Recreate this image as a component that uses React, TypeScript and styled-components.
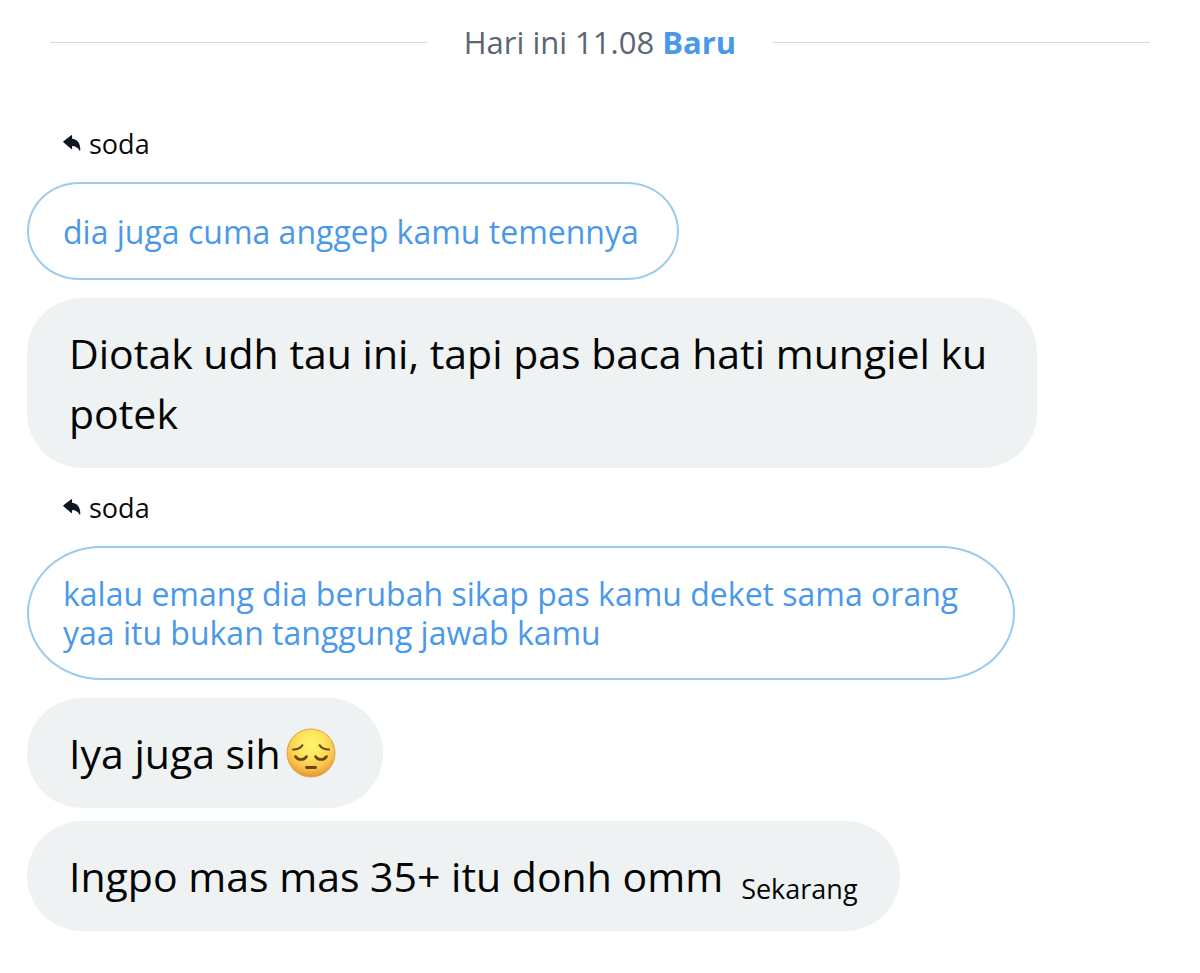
import React from "react";
import styled, { createGlobalStyle } from "styled-components";

const GlobalStyle = createGlobalStyle`
  *, *::before, *::after { box-sizing: border-box; }
  body {
    margin: 0;
    background: #ffffff;
    color: #0a0a0c;
    font-family: "Open Sans", "Noto Sans", sans-serif;
  }
`;

const Conversation = styled.main`
  display: flex;
  flex-direction: column;
  padding: 16px 27px 42px;
`;

const DateDivider = styled.div`
  display: flex;
  align-items: center;
  gap: 37px;
  margin: 0 23px 56px;
  color: #5b6573;
  font-size: 31px;
  line-height: 52px;

  &::before,
  &::after {
    content: "";
    flex: 1;
    height: 1px;
    background: #d3dae1;
  }
`;

const NewMark = styled.strong`
  color: #4a99e9;
  font-weight: 700;
`;

const Thread = styled.section`
  display: flex;
  flex-direction: column;
  align-items: flex-start;
  margin-bottom: 20px;

  &:last-child {
    margin-bottom: 0;
  }
`;

const ReplyTo = styled.p`
  display: flex;
  align-items: center;
  gap: 8px;
  margin: 0 36px 18px;
  font-size: 27px;
  line-height: 40px;
`;

const Quote = styled.blockquote<{ $tall?: boolean }>`
  display: flex;
  align-items: center;
  max-width: 988px;
  min-height: 98px;
  margin: 0 0 18px;
  padding: 26px 38px 26px 34px;
  border: 2px solid #9ccbee;
  border-radius: ${(p) => (p.$tall ? "74px / 67px" : "52px / 49px")};
  color: #4a99e9;
  font-size: 32px;
  line-height: 39px;
`;

const Bubbles = styled.div`
  display: flex;
  flex-direction: column;
  align-items: flex-start;
  gap: 13px;
`;

const Bubble = styled.div`
  display: flex;
  align-items: center;
  max-width: 1010px;
  padding: 25px 42px;
  border-radius: 55px;
  background: #eef2f3;
  color: #050506;
  font-size: 41px;
  line-height: 60px;
`;

const Time = styled.time`
  margin: 25px 0 0 18px;
  font-size: 27px;
  line-height: 35px;
`;

const ArrowSvg = styled.svg`
  width: 18px;
  height: 18px;
`;

const EmojiSvg = styled.svg`
  width: 50px;
  height: 50px;
  margin: 0 5px;
`;

const ReplyArrow = () => (
  <ArrowSvg viewBox="0 0 18 18" aria-hidden="true">
    <path
      d="M.4 6.300 8.300.2c.4-.3.8-.1.8.4v3.200c5 .4 8.400 4.200 8.200 11.400 0 .5-.5.6-.8.2-1.700-2.900-4-4.300-7.400-4.400v2.500c0 .5-.4.7-.8.4L.4 7.300a.7.7 0 0 1 0-1z"
      fill="#111722"
    />
  </ArrowSvg>
);

const PensiveFace = () => (
  <EmojiSvg viewBox="0 0 50 50" role="img" aria-label="pensive face">
    <defs>
      <radialGradient id="face" cx="50%" cy="32%" r="66%">
        <stop offset="0" stopColor="#fff56e" />
        <stop offset=".45" stopColor="#fee25c" />
        <stop offset=".78" stopColor="#f8c04a" />
        <stop offset="1" stopColor="#e39a38" />
      </radialGradient>
    </defs>
    <circle cx="25" cy="25" r="24" fill="url(#face)" stroke="#e2a145" strokeWidth="1" />
    <g fill="none" stroke="#6b4310" strokeLinecap="round">
      <path d="M7 21.500c4 .2 7.300-1.200 9.500-4.300" strokeWidth="2" />
      <path d="M43 21.500c-4 .2-7.300-1.200-9.500-4.300" strokeWidth="2" />
      <path d="M9.500 28.500c2.200 4 8.800 4 11 0" strokeWidth="2.600" />
      <path d="M29.500 28.500c2.200 4 8.800 4 11 0" strokeWidth="2.600" />
      <path d="M20.500 39.500h9" strokeWidth="2.800" />
    </g>
  </EmojiSvg>
);

export default function App() {
  return (
    <>
      <GlobalStyle />
      <Conversation>
        <DateDivider>
          <span>
            Hari ini 11.08 <NewMark>Baru</NewMark>
          </span>
        </DateDivider>

        <Thread>
          <ReplyTo>
            <ReplyArrow />
            soda
          </ReplyTo>
          <Quote>dia juga cuma anggep kamu temennya</Quote>
          <Bubbles>
            <Bubble>Diotak udh tau ini, tapi pas baca hati mungiel ku potek</Bubble>
          </Bubbles>
        </Thread>

        <Thread>
          <ReplyTo>
            <ReplyArrow />
            soda
          </ReplyTo>
          <Quote $tall>
            kalau emang dia berubah sikap pas kamu deket sama orang yaa itu bukan tanggung jawab kamu
          </Quote>
          <Bubbles>
            <Bubble>
              Iya juga sih
              <PensiveFace />
            </Bubble>
            <Bubble>
              Ingpo mas mas 35+ itu donh omm
              <Time>Sekarang</Time>
            </Bubble>
          </Bubbles>
        </Thread>
      </Conversation>
    </>
  );
}
